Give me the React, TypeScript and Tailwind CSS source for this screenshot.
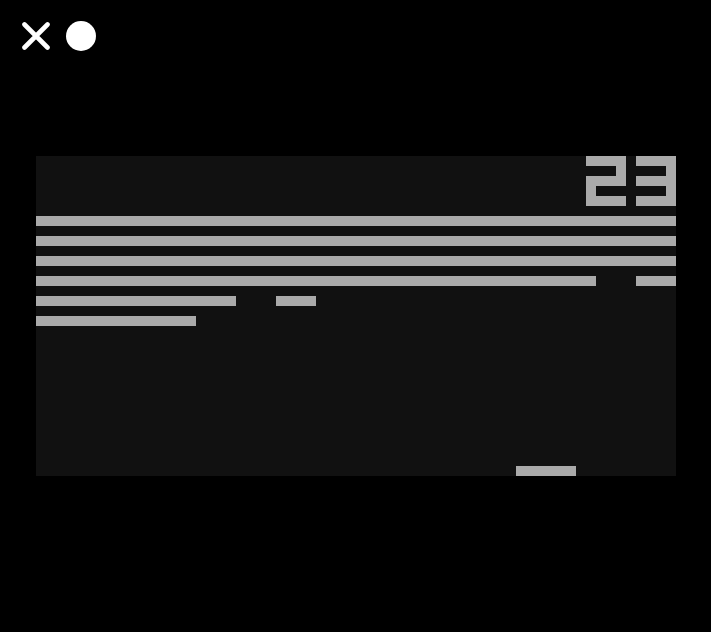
import React from 'react'

// brick segments per row: [left, width] in px, canvas coords
const brickRows: [number, number][][] = [
  [[0, 640]],
  [[0, 640]],
  [[0, 640]],
  [[0, 560], [600, 40]],
  [[0, 200], [240, 40]],
  [[0, 160]],
]

const DIGITS: Record<string, string[]> = {
  '2': ['1111', '0001', '1111', '1000', '1111'],
  '3': ['1111', '0001', '1111', '0001', '1111'],
}

function Digit({ d }: { d: string }) {
  const rows = DIGITS[d]
  return (
    <div className="grid grid-cols-[repeat(4,10px)] grid-rows-[repeat(5,10px)]">
      {rows.flatMap((row, r) =>
        row.split('').map((c, i) => (
          <div key={`${r}-${i}`} className={c === '1' ? 'bg-[#aaaaaa]' : ''} />
        ))
      )}
    </div>
  )
}

export default function App() {
  const score = '23'

  return (
    <div className="min-h-[632px] w-full bg-black">
      {/* Header controls */}
      <div className="flex items-center gap-4 pl-[22px] pt-[21px]">
        <button className="flex h-[30px] w-[28px] items-center justify-center">
          <svg width="28" height="28" viewBox="0 0 28 28">
            <path d="M2.5 2.5 L25.5 25.5 M25.5 2.5 L2.5 25.5" stroke="white" strokeWidth="4.6" strokeLinecap="round" />
          </svg>
        </button>
        <div className="h-[30px] w-[30px] rounded-full bg-white" />
      </div>

      {/* Game canvas */}
      <div className="relative ml-[36px] mt-[105px] h-[320px] w-[640px] bg-[#111111]">
        {/* Score */}
        <div className="absolute right-0 top-0 flex gap-[10px]">
          {score.split('').map((d, i) => (
            <Digit key={i} d={d} />
          ))}
        </div>

        {/* Bricks */}
        {brickRows.map((row, r) =>
          row.map(([left, width], i) => (
            <div
              key={`${r}-${i}`}
              className="absolute h-[10px] bg-[#aaaaaa]"
              style={{ top: 60 + r * 20, left, width }}
            />
          ))
        )}

        {/* Paddle */}
        <div className="absolute left-[480px] top-[310px] h-[10px] w-[60px] bg-[#aaaaaa]" />
      </div>
    </div>
  )
}
